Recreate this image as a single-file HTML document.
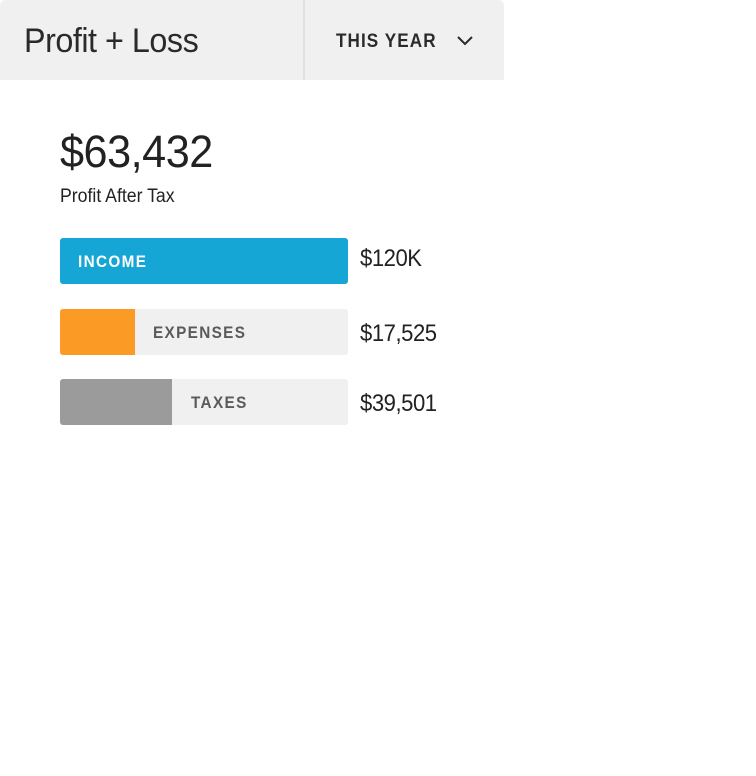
<!DOCTYPE html>
<html><head><meta charset="utf-8"><style>
html,body{margin:0;padding:0;background:#fff;width:756px;height:776px;overflow:hidden;font-family:"Liberation Sans",sans-serif;color:#222;}
.hdr{position:absolute;left:0;top:0;width:504px;height:80px;background:#f0f0f0;border-radius:6px 6px 0 0;}
.div{position:absolute;left:303px;top:0;width:2px;height:80px;background:#e0e0e0;}
.title{position:absolute;left:24px;top:22px;font-size:34px;letter-spacing:-0.5px;color:#2a2a2a;transform:scaleX(.95);transform-origin:left;}
.yr{position:absolute;left:336px;top:31px;font-size:19px;font-weight:bold;letter-spacing:1.2px;color:#2a2a2a;transform:scaleX(.9);transform-origin:left;}
.chev{position:absolute;left:456px;top:35px;}
.big{position:absolute;left:60px;top:126px;font-size:45px;letter-spacing:-0.5px;color:#222;transform:scaleX(.96);transform-origin:left;}
.sub{position:absolute;left:60px;top:186px;font-size:19px;color:#222;transform:scaleX(.93);transform-origin:left;}
.bar{position:absolute;left:60px;width:288px;height:46px;border-radius:3px;background:#f0f0f0;overflow:hidden;}
.fill{position:absolute;left:0;top:0;height:46px;}
.lbl{position:absolute;top:14px;font-size:17px;font-weight:bold;letter-spacing:1.5px;color:#5a5a5a;transform:scaleX(.9);transform-origin:left;}
.val{position:absolute;left:360px;font-size:24px;color:#222;letter-spacing:-0.5px;transform:scaleX(.92);transform-origin:left;}
</style></head><body>
<div class="hdr"></div>
<div class="div"></div>
<div class="title">Profit + Loss</div>
<div class="yr">THIS YEAR</div>
<svg class="chev" width="18" height="12" viewBox="0 0 18 12"><path d="M2 2 L9 9 L16 2" fill="none" stroke="#2a2a2a" stroke-width="2"/></svg>
<div class="big">$63,432</div>
<div class="sub">Profit After Tax</div>

<div class="bar" style="top:238px;background:#16a6d6"><div class="lbl" style="left:18px;color:#fff">INCOME</div></div>
<div class="val" style="top:245px">$120K</div>

<div class="bar" style="top:309px"><div class="fill" style="width:75px;background:#fb9a25"></div><div class="lbl" style="left:93px">EXPENSES</div></div>
<div class="val" style="top:320px">$17,525</div>

<div class="bar" style="top:379px"><div class="fill" style="width:112px;background:#9b9b9b"></div><div class="lbl" style="left:131px">TAXES</div></div>
<div class="val" style="top:390px">$39,501</div>
</body></html>
